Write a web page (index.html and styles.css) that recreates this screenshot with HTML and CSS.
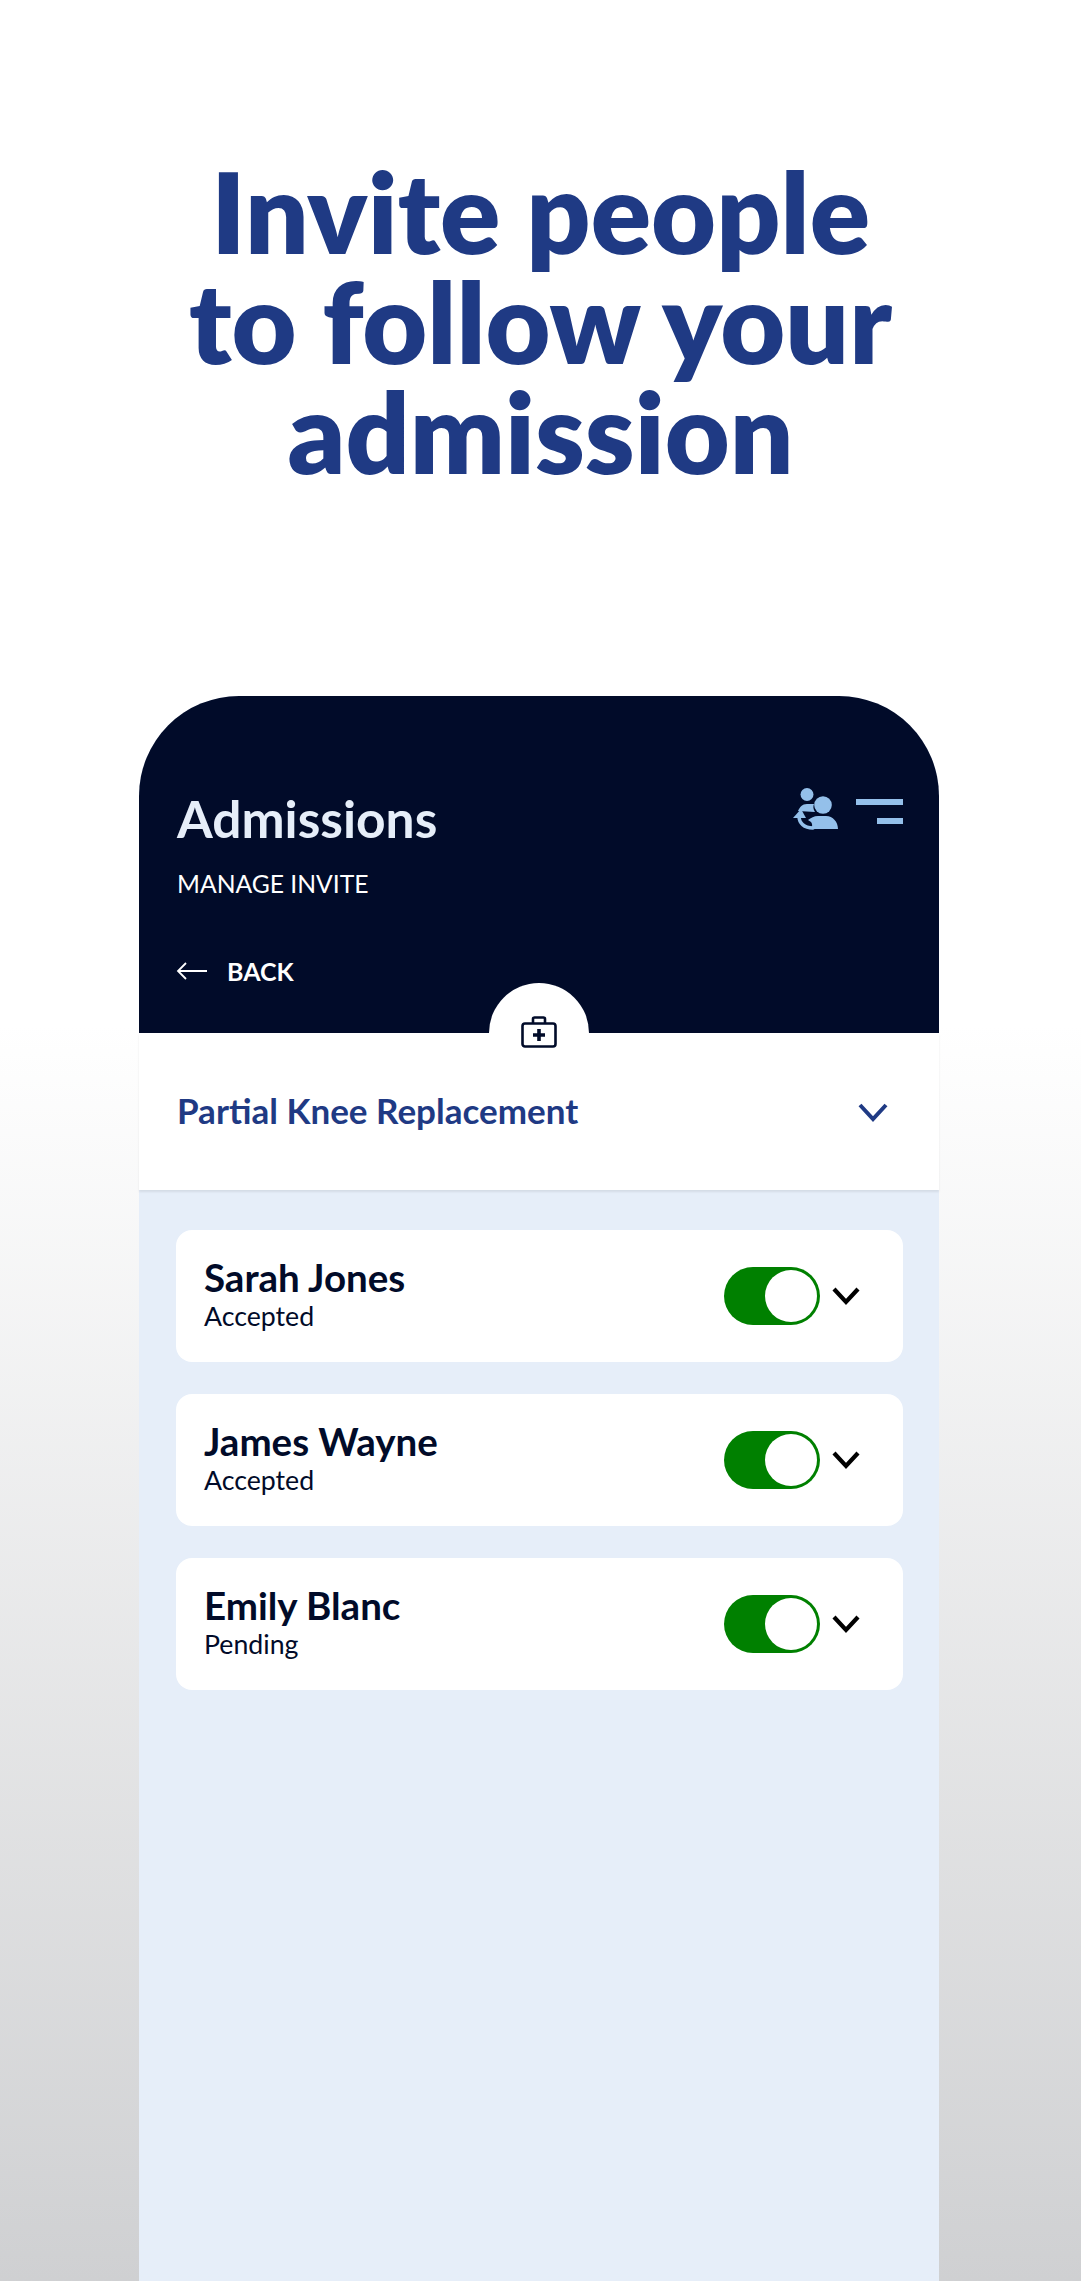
FILE: index.html
```html
<!DOCTYPE html>
<html lang="en">
<head>
<meta charset="utf-8">
<title>Invite people to follow your admission</title>
<link rel="stylesheet" href="styles.css">
</head>
<body>
<main class="page">
  <h1 class="hero">Invite people<br>to follow your<br>admission</h1>
  <section class="phone">
    <header class="head">
      <div class="head-top">
        <h2 class="title">Admissions</h2>
        <div class="head-icons">
          <svg class="ic-people" viewBox="0 0 46 42" width="46" height="42" aria-hidden="true">
            <circle cx="15" cy="6.500" r="6.500" fill="#94c0ea"/>
            <path d="M6 23c2-4 4-7 9-7h7c-1 2-1 5 1 8z" fill="#94c0ea"/>
            <circle cx="31" cy="17" r="8.800" fill="#94c0ea"/>
            <path d="M19 41c1-2 2-4 0-7l-3-2c3-2 6-4 10-4h8c7 0 12 6 12 13z" fill="#94c0ea"/>
            <path d="M7 28c0 7 5 12 14 12" fill="none" stroke="#94c0ea" stroke-width="3.500" stroke-linecap="round"/>
            <path d="M1 30l8-9 5 9z" fill="#94c0ea"/>
          </svg>
          <div class="ic-filter"><span class="bar-long"></span><span class="bar-short"></span></div>
        </div>
      </div>
      <p class="subtitle">MANAGE INVITE</p>
      <a class="back">
        <svg viewBox="0 0 32 20" width="32" height="20" aria-hidden="true"><path d="M31 10H2M10 2l-8 8 8 8" fill="none" stroke="#fff" stroke-width="1.800"/></svg>
        <span>BACK</span>
      </a>
      <div class="notch">
        <svg viewBox="0 0 36 32" width="36" height="32" aria-hidden="true">
          <rect x="1.500" y="7.500" width="33" height="23" rx="2.500" fill="none" stroke="#010b29" stroke-width="2.600"/>
          <path d="M12 7V3a1.500 1.500 0 0 1 1.500-1.500h9A1.500 1.500 0 0 1 24 3v4" fill="none" stroke="#010b29" stroke-width="2.600"/>
          <path d="M18 13v12M12 19h12" fill="none" stroke="#010b29" stroke-width="3.600"/>
        </svg>
      </div>
    </header>
    <div class="select">
      <span class="select-label">Partial Knee Replacement</span>
      <svg viewBox="0 0 30 20" width="30" height="20" aria-hidden="true"><path d="M2 3l13 14L28 3" fill="none" stroke="#1f3a84" stroke-width="4"/></svg>
    </div>
    <div class="list">
      <article class="card">
        <div class="who"><h3 class="name">Sarah Jones</h3><p class="status">Accepted</p></div>
        <div class="controls"><span class="toggle"><span class="knob"></span></span>
          <svg viewBox="0 0 30 20" width="30" height="20" aria-hidden="true"><path d="M3 3l12 13L27 3" fill="none" stroke="#000" stroke-width="4.200"/></svg></div>
      </article>
      <article class="card">
        <div class="who"><h3 class="name">James Wayne</h3><p class="status">Accepted</p></div>
        <div class="controls"><span class="toggle"><span class="knob"></span></span>
          <svg viewBox="0 0 30 20" width="30" height="20" aria-hidden="true"><path d="M3 3l12 13L27 3" fill="none" stroke="#000" stroke-width="4.200"/></svg></div>
      </article>
      <article class="card">
        <div class="who"><h3 class="name">Emily Blanc</h3><p class="status">Pending</p></div>
        <div class="controls"><span class="toggle"><span class="knob"></span></span>
          <svg viewBox="0 0 30 20" width="30" height="20" aria-hidden="true"><path d="M3 3l12 13L27 3" fill="none" stroke="#000" stroke-width="4.200"/></svg></div>
      </article>
    </div>
  </section>
</main>
</body>
</html>
```
FILE: styles.css
```css
* { box-sizing: border-box; }
html, body { margin: 0; padding: 0; }
body { font-family: "Lato", "Liberation Sans", sans-serif; }
.page {
  height: 2281px;
  overflow: hidden;
  display: flex;
  flex-direction: column;
  align-items: center;
  background: linear-gradient(#fff 0, #fff 1025px, #cfd0d2 2281px);
}
.hero {
  margin: 0;
  padding-top: 156px;
  height: 696px;
  font-size: 112px;
  line-height: 110px;
  font-weight: 800;
  color: #1f3a84;
  text-align: center;
}
.phone {
  width: 800px;
  flex: 1;
  align-self: flex-start;
  margin-left: 139px;
  display: flex;
  flex-direction: column;
  background: #e6eef9;
  border-radius: 100px 100px 0 0;
}
.head {
  position: relative;
  height: 337px;
  padding: 94px 36px 0 38px;
  background: #010b29;
  border-radius: 100px 100px 0 0;
}
.head-top { display: flex; justify-content: space-between; align-items: flex-start; }
.title { margin: 0; font-size: 51.500px; line-height: 56px; font-weight: 700; color: #e6eef9; }
.head-icons { display: flex; align-items: center; gap: 18px; margin-top: -2px; }
.ic-filter { display: flex; flex-direction: column; align-items: flex-end; gap: 13px; width: 47px; padding-top: 4px; }
.bar-long { width: 47px; height: 6px; background: #94c0ea; }
.bar-short { width: 26px; height: 6px; background: #94c0ea; }
.subtitle { margin: 23px 0 0; font-size: 24.700px; line-height: 30px; color: #fff; }
.back { display: flex; align-items: center; gap: 19px; margin-top: 57px; margin-left: -1px; color: #fff; font-size: 25px; line-height: 30px; font-weight: 700; }
.notch {
  position: absolute;
  left: 350px;
  bottom: -1px;
  width: 100px;
  height: 51px;
  padding: 33px 0 0 0;
  display: flex;
  justify-content: center;
  align-items: flex-start;
  background: #fff;
  border-radius: 50px 50px 0 0;
}
.select {
  height: 157px;
  padding: 0 51px 0 38px;
  display: flex;
  align-items: center;
  justify-content: space-between;
  background: #fff;
  box-shadow: 0 2px 2px rgba(0, 0, 0, .08);
}
.select-label { font-size: 35px; line-height: 44px; margin-top: -3px; font-weight: 700; color: #1f3a84; }
.list { padding: 40px 36px 0 37px; display: flex; flex-direction: column; gap: 32px; }
.card {
  height: 132px;
  padding: 0 28px;
  display: flex;
  align-items: center;
  justify-content: space-between;
  background: #fff;
  border-radius: 16px;
}
.name { margin: 0 0 3px; font-size: 38.500px; line-height: 40px; margin-top: -2px; font-weight: 700; color: #010b29; }
.status { margin: 0; font-size: 26.700px; line-height: 33px; color: #010b29; }
.controls { display: flex; align-items: center; gap: 11px; margin-right: 14px; }
.toggle {
  width: 96px;
  height: 58px;
  display: flex;
  justify-content: flex-end;
  align-items: center;
  padding-right: 3px;
  background: #008000;
  border-radius: 29px;
}
.knob { width: 52px; height: 52px; background: #fff; border-radius: 50%; }
```
